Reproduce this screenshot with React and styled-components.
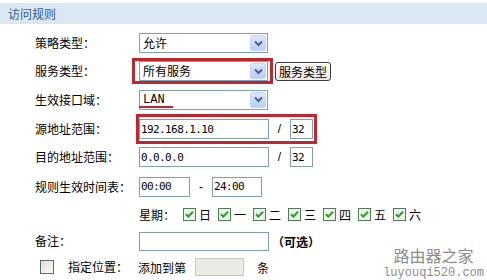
import React from 'react';
import styled, { createGlobalStyle } from 'styled-components';

const Global = createGlobalStyle`
  html, body { margin: 0; padding: 0; background: #fff; }
  body {
    font-family: "Noto Sans CJK SC", "Liberation Sans", sans-serif;
    font-size: 12px;
    color: #000;
  }
`;

const Page = styled.div`
  position: relative;
  width: 487px;
  height: 280px;
  padding-top: 3px;
  box-sizing: border-box;
  overflow: hidden;
`;

const Header = styled.div`
  height: 21px;
  background: #dce7f4;
  display: flex;
  align-items: center;
  padding-left: 8px;
  color: #2e5a88;
  font-size: 12px;
`;

const Form = styled.div`
  margin-top: 5px;
  display: flex;
  flex-direction: column;
`;

const Row = styled.div`
  display: grid;
  grid-template-columns: ${p => p.$labelW ?? 104}px auto;
  align-items: center;
  height: ${p => p.$h}px;
  padding-left: ${p => p.$indent ?? 35}px;
`;

const Label = styled.div`
  display: flex;
  align-items: center;
  gap: ${p => p.$gap ?? 0}px;
  white-space: nowrap;
  line-height: 14px;
`;

const Field = styled.div`
  display: flex;
  align-items: center;
  white-space: nowrap;
`;

const SelectBox = styled.div`
  width: 129px;
  height: 20px;
  box-sizing: border-box;
  border: 1px solid #7f9db9;
  background: #fff;
  display: flex;
  align-items: center;
`;

const SelectText = styled.span`
  position: relative;
  flex: 1;
  padding-left: 3px;
  font-family: ${p => (p.$mono ? '"Liberation Mono", monospace' : 'inherit')};
  line-height: 16px;
`;

const Underline = styled.span`
  position: relative;
  display: inline-block;
  &::after {
    content: '';
    position: absolute;
    left: -4px;
    top: 14px;
    width: 34px;
    height: 2px;
    background: #c0262c;
  }
`;

const DropBtn = styled.span`
  width: 16px;
  height: 16px;
  margin-right: 1px;
  box-sizing: border-box;
  border: 1px solid #c5d5fc;
  border-radius: 2px;
  background: linear-gradient(#dde8fe, #b9cdf6);
  display: flex;
  align-items: center;
  justify-content: center;
`;

const Mark = styled.div`
  display: flex;
  align-items: center;
  box-sizing: border-box;
  border: 3px solid #c0262c;
  margin-left: ${p => p.$ml}px;
  padding: ${p => p.$pad};
`;

const TextInput = styled.input`
  width: ${p => p.$w}px;
  height: ${p => p.$h ?? 20}px;
  box-sizing: border-box;
  margin: 0;
  border: 1px solid ${p => (p.disabled ? '#c9c7ba' : '#7f9db9')};
  background: ${p => (p.disabled ? '#ebebe4' : '#fff')};
  padding: 0 1px;
  font-family: "DejaVu Sans Mono", monospace;
  font-size: 11px;
  letter-spacing: -0.6px;
  color: #000;
  outline: none;
`;

const Sep = styled.span`
  width: ${p => p.$w}px;
  text-align: center;
  font-family: "Liberation Sans", sans-serif;
  font-size: 12px;
`;

const Btn = styled.button`
  height: 19px;
  margin-left: 2px;
  padding: 0 3px;
  box-sizing: border-box;
  border: 1px solid #3c3c3c;
  border-radius: 3px;
  background: linear-gradient(#ffffff, #ece9e0);
  font-family: "Noto Sans CJK SC", sans-serif;
  font-size: 12px;
  line-height: 15px;
  color: #000;
`;

const Days = styled.div`
  display: flex;
  align-items: center;
  gap: 7px;
`;

const Day = styled.span`
  display: flex;
  align-items: center;
  gap: 3px;
`;

const WeekLabel = styled.span`
  width: 44px;
`;

const Note = styled.span`
  margin-left: 3px;
  font-weight: bold;
`;

const Text = styled.span`
  margin-left: ${p => p.$ml ?? 0}px;
  margin-right: ${p => p.$mr ?? 0}px;
`;

const Watermark = styled.div`
  position: absolute;
  right: 3px;
  bottom: 1px;
  display: flex;
  flex-direction: column;
  align-items: center;
  gap: 5px;
  color: #8c8c8c;
`;

const WmTitle = styled.span`
  font-size: 16px;
  line-height: 16px;
`;

const WmUrl = styled.span`
  font-family: "Liberation Mono", monospace;
  font-size: 12px;
  line-height: 11px;
`;

const Chevron = () => (
  <svg width="9" height="7" viewBox="0 0 9 7">
    <path d="M1 1.5 L4.5 5 L8 1.5" stroke="#4d6185" strokeWidth="2" fill="none" />
  </svg>
);

const Select = ({ children, mono }) => (
  <SelectBox>
    <SelectText $mono={mono}>{children}</SelectText>
    <DropBtn><Chevron /></DropBtn>
  </SelectBox>
);

const Check = ({ checked }) =>
  checked ? (
    <svg width="13" height="13" viewBox="0 0 13 13">
      <rect x="0.5" y="0.5" width="12" height="12" fill="#eef2ea" stroke="#4f7a5c" />
      <path d="M3 6.2 L5.3 8.6 L10 3.8" stroke="#21a121" strokeWidth="2" fill="none" />
    </svg>
  ) : (
    <svg width="14" height="14" viewBox="0 0 14 14">
      <defs>
        <linearGradient id="cbg" x1="0" y1="0" x2="1" y2="1">
          <stop offset="0" stopColor="#dcdcd6" />
          <stop offset="1" stopColor="#fbfbf9" />
        </linearGradient>
      </defs>
      <rect x="0.5" y="0.5" width="13" height="13" fill="url(#cbg)" stroke="#5a6a7e" />
    </svg>
  );

const days = ['日', '一', '二', '三', '四', '五', '六'];

export default function App() {
  return (
    <>
      <Global />
      <Page>
        <Header>访问规则</Header>
        <Form>
          <Row $h={28}>
            <Label>策略类型：</Label>
            <Field><Select>允许</Select></Field>
          </Row>
          <Row $h={28}>
            <Label>服务类型：</Label>
            <Field>
              <Mark $ml={-7} $pad="0 2px 0 4px"><Select>所有服务</Select></Mark>
              <Btn>服务类型</Btn>
            </Field>
          </Row>
          <Row $h={29}>
            <Label>生效接口域：</Label>
            <Field><Select mono><Underline>LAN</Underline></Select></Field>
          </Row>
          <Row $h={28}>
            <Label>源地址范围：</Label>
            <Field>
              <Mark $ml={-3} $pad="2px 1px 2px 0">
                <TextInput $w={130} readOnly value="192.168.1.10" />
                <Sep $w={21}>/</Sep>
                <TextInput $w={23} readOnly value="32" />
              </Mark>
            </Field>
          </Row>
          <Row $h={30}>
            <Label>目的地址范围：</Label>
            <Field>
              <TextInput $w={130} readOnly value="0.0.0.0" />
              <Sep $w={21}>/</Sep>
              <TextInput $w={23} readOnly value="32" />
            </Field>
          </Row>
          <Row $h={29}>
            <Label>规则生效时间表：</Label>
            <Field>
              <TextInput $w={51} readOnly value="00:00" />
              <Sep $w={22}>-</Sep>
              <TextInput $w={50} readOnly value="24:00" />
            </Field>
          </Row>
          <Row $h={27}>
            <Label />
            <Field>
              <WeekLabel>星期：</WeekLabel>
              <Days>
                {days.map(d => (
                  <Day key={d}><Check checked />{d}</Day>
                ))}
              </Days>
            </Field>
          </Row>
          <Row $h={26}>
            <Label>备注：</Label>
            <Field>
              <TextInput $w={130} $h={19} readOnly value="" />
              <Note>（可选）</Note>
            </Field>
          </Row>
          <Row $h={26} $indent={40} $labelW={98}>
            <Label $gap={14}><Check />指定位置：</Label>
            <Field>
              <Text $mr={9}>添加到第</Text>
              <TextInput $w={49} $h={18} disabled readOnly value="" />
              <Text $ml={13}>条</Text>
            </Field>
          </Row>
        </Form>
        <Watermark>
          <WmTitle>路由器之家</WmTitle>
          <WmUrl>luyouqi520.com</WmUrl>
        </Watermark>
      </Page>
    </>
  );
}
